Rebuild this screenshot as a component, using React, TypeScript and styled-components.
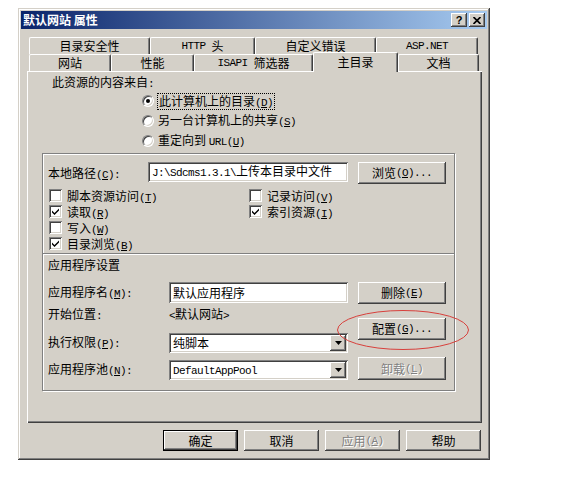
import React from "react";
import styled, { createGlobalStyle, css } from "styled-components";

const FACE = "#D4D0C8";
const RAISED = `inset -1px -1px #404040, inset 1px 1px #ffffff, inset -2px -2px #808080, inset 2px 2px ${FACE}`;
const SUNKEN = `inset 1px 1px #808080, inset -1px -1px #ffffff, inset 2px 2px #404040, inset -2px -2px ${FACE}`;

const GlobalStyle = createGlobalStyle`
  html, body { margin: 0; padding: 0; background: #ffffff; }
  body {
    font-family: "Noto Sans CJK SC", "Noto Sans", sans-serif;
    font-size: 12px;
    color: #000000;
  }
  * { box-sizing: border-box; }
`;

const Page = styled.div`
  position: relative;
  width: 573px;
  height: 501px;
  padding: 8px 0 0 18px;
`;

const Window = styled.div`
  width: 472px;
  height: 452px;
  padding: 3px;
  background: ${FACE};
  box-shadow: inset -1px -1px #404040, inset 1px 1px ${FACE}, inset -2px -2px #808080, inset 2px 2px #ffffff;
  display: flex;
  flex-direction: column;
`;

const TitleBar = styled.div`
  height: 18px;
  display: flex;
  align-items: center;
  padding: 0 2px;
  background: linear-gradient(to right, #0a246a, #a6caf0);
`;

const TitleText = styled.div`
  flex: 1;
  color: #ffffff;
  font-weight: 700;
  font-size: 12px;
  line-height: 12px;
`;

const CaptionButton = styled.div`
  width: 16px;
  height: 14px;
  background: ${FACE};
  box-shadow: ${RAISED};
  display: flex;
  align-items: center;
  justify-content: center;
  font-family: "Liberation Sans", sans-serif;
  font-weight: 700;
  font-size: 11px;
  line-height: 11px;
  & + & { margin-left: 2px; }
`;

const Body = styled.div`
  display: flex;
  flex-direction: column;
  padding: 8px 5px 0 6px;
`;

const TabRows = styled.div`
  padding-left: 2px;
  display: flex;
  flex-direction: column;
`;

const TabRow = styled.div`
  display: flex;
  height: 17px;
`;

const Tab = styled.div<{ $w: number; $sel?: boolean }>`
  width: ${(p) => p.$w}px;
  height: 17px;
  flex: none;
  background: ${FACE};
  border-top: 1px solid #ffffff;
  border-left: 1px solid #ffffff;
  border-right: 1px solid #404040;
  border-top-left-radius: 2px;
  border-top-right-radius: 2px;
  box-shadow: inset -1px 0 #808080;
  display: flex;
  align-items: center;
  justify-content: center;
  line-height: 12px;
  white-space: nowrap;
  ${(p) =>
    p.$sel &&
    css`
      position: relative;
      z-index: 1;
      height: 20px;
      margin-top: -2px;
      margin-bottom: -1px;
      align-items: flex-start;
      padding-top: 3px;
    `}
`;

const Panel = styled.div`
  height: 352px;
  background: ${FACE};
  box-shadow: inset 1px 1px #ffffff, inset -1px -1px #404040, inset -2px -2px #808080;
  padding: 5px 0 0 15px;
  display: flex;
  flex-direction: column;
`;

const Heading = styled.div`
  margin-left: 10px;
  height: 12px;
  line-height: 12px;
`;

const RadioList = styled.div`
  margin: 3px 0 0 100px;
  display: flex;
  flex-direction: column;
`;

const RadioRow = styled.div`
  height: 20px;
  display: flex;
  align-items: center;
  gap: 4px;
  line-height: 12px;
`;

const RadioCircle = styled.span<{ $on?: boolean }>`
  position: relative;
  width: 12px;
  height: 12px;
  border-radius: 50%;
  background: #ffffff;
  border: 1px solid;
  border-color: #808080 #ffffff #ffffff #808080;
  box-shadow: inset 1px 1px #404040, inset -1px -1px ${FACE};
  flex: none;
  ${(p) =>
    p.$on &&
    css`
      &::after {
        content: "";
        position: absolute;
        left: 3px;
        top: 3px;
        width: 4px;
        height: 4px;
        border-radius: 50%;
        background: #000000;
      }
    `}
`;

const Focus = styled.span`
  outline: 1px dotted #000000;
  padding: 1px 1px 0 1px;
`;

const GroupBox = styled.div`
  width: 413px;
  height: 238px;
  margin-top: 2px;
  border: 1px solid #808080;
  box-shadow: inset 1px 1px #ffffff, 1px 1px #ffffff;
  padding: 8px 0 0 5px;
  display: flex;
  flex-direction: column;
`;

const Row = styled.div<{ $h: number; $mt?: number; $top?: boolean }>`
  display: flex;
  align-items: ${(p) => (p.$top ? "flex-start" : "center")};
  height: ${(p) => p.$h}px;
  margin-top: ${(p) => p.$mt ?? 0}px;
  line-height: 12px;
  white-space: nowrap;
`;

const Label = styled.div<{ $w: number; $mt?: number }>`
  width: ${(p) => p.$w}px;
  margin-top: ${(p) => p.$mt ?? 0}px;
  flex: none;
  line-height: 12px;
`;

const Field = styled.div<{ $w: number; $h: number }>`
  width: ${(p) => p.$w}px;
  height: ${(p) => p.$h}px;
  flex: none;
  background: #ffffff;
  box-shadow: ${SUNKEN};
  display: flex;
  align-items: center;
  padding: 0 2px 0 4px;
  line-height: 12px;
  white-space: nowrap;
  overflow: hidden;
`;

const FieldText = styled.span`
  flex: 1;
`;

const DropButton = styled.span`
  width: 16px;
  height: 16px;
  flex: none;
  background: ${FACE};
  box-shadow: ${RAISED};
  display: flex;
  align-items: center;
  justify-content: center;
`;

const Button = styled.div<{ $w: number; $h: number; $mt?: number; $def?: boolean; $off?: boolean }>`
  width: ${(p) => p.$w}px;
  height: ${(p) => p.$h}px;
  margin-top: ${(p) => p.$mt ?? 0}px;
  flex: none;
  background: ${FACE};
  box-shadow: ${RAISED};
  display: flex;
  align-items: center;
  justify-content: center;
  line-height: 12px;
  white-space: nowrap;
  ${(p) =>
    p.$def &&
    css`
      border: 1px solid #000000;
      box-shadow: inset -1px -1px #404040, inset 1px 1px #ffffff, inset -2px -2px #808080;
    `}
  ${(p) =>
    p.$off &&
    css`
      color: #808080;
      text-shadow: 1px 1px #ffffff;
    `}
`;

const PathButton = styled(Button)`
  margin-left: 10px;
`;

const Checks = styled.div`
  margin: 5px 0 0 1px;
  display: grid;
  grid-template-columns: 200px auto;
  grid-template-rows: repeat(4, 16px);
  grid-auto-flow: column;
`;

const CheckItem = styled.div`
  display: flex;
  align-items: flex-start;
  gap: 5px;
  line-height: 13px;
  white-space: nowrap;
`;

const CheckBox = styled.span`
  width: 13px;
  height: 13px;
  flex: none;
  background: #ffffff;
  box-shadow: ${SUNKEN};
  display: flex;
  align-items: center;
  justify-content: center;
`;

const Separator = styled.div`
  margin: 0 0 0 -5px;
  width: 411px;
  height: 2px;
  border-top: 1px solid #808080;
  border-bottom: 1px solid #ffffff;
`;

const SectionTitle = styled.div`
  margin-top: 4px;
  height: 12px;
  line-height: 12px;
`;

const AppArea = styled.div`
  margin-top: 11px;
  display: flex;
`;

const LeftCol = styled.div`
  width: 300px;
  display: flex;
  flex-direction: column;
`;

const RightCol = styled.div`
  margin-left: 10px;
  display: flex;
  flex-direction: column;
`;

const ButtonBar = styled.div`
  margin-top: 7px;
  height: 21px;
  display: flex;
  justify-content: flex-end;
  gap: 6px;
  padding-right: 1px;
`;

const Lat = styled.span`
  font-family: "Liberation Mono", monospace;
  font-size: 11px;
  letter-spacing: -0.6px;
`;

const Mark = styled.svg`
  position: absolute;
  left: 336px;
  top: 309px;
  pointer-events: none;
`;

const Acc = ({ k }: { k: string }) => (
  <Lat>
    (<u>{k}</u>)
  </Lat>
);

const Colon = () => <Lat>:</Lat>;

const Check = ({ on, children }: { on?: boolean; children: React.ReactNode }) => (
  <CheckItem>
    <CheckBox>
      {on && (
        <svg width="9" height="9" viewBox="0 0 9 9">
          <path d="M1 3.5 L3.5 6 L8 1.5 L8 3.5 L3.5 8 L1 5.5 Z" fill="#000" />
        </svg>
      )}
    </CheckBox>
    <span>{children}</span>
  </CheckItem>
);

const Arrow = () => (
  <svg width="7" height="4" viewBox="0 0 7 4">
    <path d="M0 0 H7 L3.5 4 Z" fill="#000" />
  </svg>
);

export default function App() {
  return (
    <Page>
      <GlobalStyle />
      <Window>
        <TitleBar>
          <TitleText>默认网站 属性</TitleText>
          <CaptionButton>?</CaptionButton>
          <CaptionButton>
            <svg width="8" height="7" viewBox="0 0 8 7">
              <path d="M0.5 0 L7.5 7 M7.5 0 L0.5 7" stroke="#000" strokeWidth="1.7" />
            </svg>
          </CaptionButton>
        </TitleBar>
        <Body>
          <TabRows>
            <TabRow>
              <Tab $w={121}>目录安全性</Tab>
              <Tab $w={105}>
                <Lat>HTTP&nbsp;</Lat>头
              </Tab>
              <Tab $w={121}>自定义错误</Tab>
              <Tab $w={102}>
                <Lat>ASP.NET</Lat>
              </Tab>
            </TabRow>
            <TabRow>
              <Tab $w={82}>网站</Tab>
              <Tab $w={83}>性能</Tab>
              <Tab $w={119}>
                <Lat>ISAPI&nbsp;</Lat>筛选器
              </Tab>
              <Tab $w={85} $sel>
                主目录
              </Tab>
              <Tab $w={81}>文档</Tab>
            </TabRow>
          </TabRows>
          <Panel>
            <Heading>
              此资源的内容来自<Colon />
            </Heading>
            <RadioList>
              <RadioRow>
                <RadioCircle $on />
                <Focus>
                  此计算机上的目录<Acc k="D" />
                </Focus>
              </RadioRow>
              <RadioRow>
                <RadioCircle />
                <span>
                  另一台计算机上的共享<Acc k="S" />
                </span>
              </RadioRow>
              <RadioRow>
                <RadioCircle />
                <span>
                  重定向到 <Lat>URL</Lat>
                  <Acc k="U" />
                </span>
              </RadioRow>
            </RadioList>
            <GroupBox>
              <Row $h={22} $top>
                <Label $w={100} $mt={5}>
                  本地路径<Acc k="C" />
                  <Colon />
                </Label>
                <Field $w={200} $h={20}>
                  <FieldText>
                    <Lat>J:\Sdcms1.3.1\</Lat>上传本目录中文件
                  </FieldText>
                </Field>
                <PathButton $w={88} $h={22}>
                  浏览<Acc k="O" />
                  <Lat>...</Lat>
                </PathButton>
              </Row>
              <Checks>
                <Check>
                  脚本资源访问<Acc k="T" />
                </Check>
                <Check on>
                  读取<Acc k="R" />
                </Check>
                <Check>
                  写入<Acc k="W" />
                </Check>
                <Check on>
                  目录浏览<Acc k="B" />
                </Check>
                <Check>
                  记录访问<Acc k="V" />
                </Check>
                <Check on>
                  索引资源<Acc k="I" />
                </Check>
              </Checks>
              <Separator />
              <SectionTitle>应用程序设置</SectionTitle>
              <AppArea>
                <LeftCol>
                  <Row $h={21}>
                    <Label $w={121}>
                      应用程序名<Acc k="M" />
                      <Colon />
                    </Label>
                    <Field $w={179} $h={21}>
                      <FieldText>默认应用程序</FieldText>
                    </Field>
                  </Row>
                  <Row $h={24}>
                    <Label $w={121}>
                      开始位置<Colon />
                    </Label>
                    <span>
                      <Lat>&lt;</Lat>默认网站<Lat>&gt;</Lat>
                    </span>
                  </Row>
                  <Row $h={20} $mt={6}>
                    <Label $w={121}>
                      执行权限<Acc k="P" />
                      <Colon />
                    </Label>
                    <Field $w={179} $h={20}>
                      <FieldText>纯脚本</FieldText>
                      <DropButton>
                        <Arrow />
                      </DropButton>
                    </Field>
                  </Row>
                  <Row $h={20} $mt={7}>
                    <Label $w={121}>
                      应用程序池<Acc k="N" />
                      <Colon />
                    </Label>
                    <Field $w={179} $h={20}>
                      <FieldText>
                        <Lat>DefaultAppPool</Lat>
                      </FieldText>
                      <DropButton>
                        <Arrow />
                      </DropButton>
                    </Field>
                  </Row>
                </LeftCol>
                <RightCol>
                  <Button $w={88} $h={22}>
                    删除<Acc k="E" />
                  </Button>
                  <Button $w={88} $h={22} $mt={14}>
                    配置<Acc k="G" />
                    <Lat>...</Lat>
                  </Button>
                  <Button $w={88} $h={23} $mt={17} $off>
                    卸载<Acc k="L" />
                  </Button>
                </RightCol>
              </AppArea>
            </GroupBox>
          </Panel>
          <ButtonBar>
            <Button $w={75} $h={21} $def>
              确定
            </Button>
            <Button $w={75} $h={21}>
              取消
            </Button>
            <Button $w={75} $h={21} $off>
              应用<Acc k="A" />
            </Button>
            <Button $w={75} $h={21}>
              帮助
            </Button>
          </ButtonBar>
        </Body>
      </Window>
      <Mark width="134" height="42" viewBox="0 0 134 42">
        <ellipse cx="67" cy="21" rx="65.5" ry="19.5" fill="none" stroke="#d8403c" strokeWidth="1" />
      </Mark>
    </Page>
  );
}
